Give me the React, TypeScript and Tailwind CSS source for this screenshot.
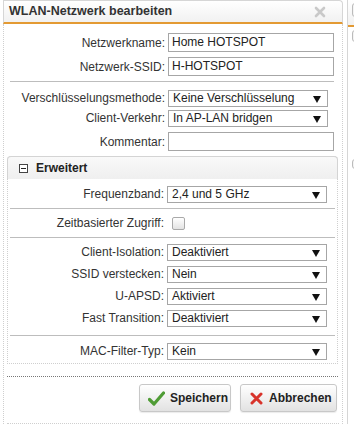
import React from "react";

const Arrow = () => (
  <svg width="8" height="7" viewBox="0 0 8 7" className="absolute right-[6px] top-[5px]">
    <path d="M0 0H8L4 7Z" fill="#111" />
  </svg>
);

function Select({ value }: { value: string }) {
  return (
    <div className="relative h-[17px] w-[160px] border border-[#a6a6a6] bg-white pl-[4px] text-[12px] leading-[15px] text-[#222]">
      {value}
      <Arrow />
    </div>
  );
}

function Input({ value }: { value?: string }) {
  return (
    <div className="h-[19px] w-[166px] border border-[#a6a6a6] bg-white pl-[3px] text-[12px] leading-[17px] text-[#222]">
      {value}
    </div>
  );
}

function Row({
  label,
  children,
  lw,
  className = "",
}: {
  label: string;
  children: React.ReactNode;
  lw: string;
  className?: string;
}) {
  return (
    <div className={`flex items-center ${className}`}>
      <div className={`${lw} shrink-0 pr-[3px] text-right text-[12px] text-[#333]`}>{label}</div>
      {children}
    </div>
  );
}

const Hr = ({ className = "" }: { className?: string }) => (
  <div className={`h-px bg-[#bdbdbd] ${className}`} />
);

export default function App() {
  const lwTop = "w-[164px]";
  const lwBox = "w-[159px]";

  return (
    <div className="flex h-[424px] w-[354px] overflow-hidden bg-white font-['Liberation_Sans',Arial,sans-serif]">
      <div className="ml-[3px] flex w-[340px] shrink-0 flex-col">
        {/* title */}
        <div className="flex h-[27px] items-center justify-between rounded-tr-[4px] border-x border-t border-b-2 border-x-[#d6d6d6] border-t-[#d6d6d6] border-b-[#e39a33] bg-gradient-to-b from-white to-[#f1f1f1] pl-[5px] pr-[16px]">
          <span className="text-[12.5px] font-bold text-[#333]">WLAN-Netzwerk bearbeiten</span>
          <svg width="12" height="12" viewBox="0 0 12 12">
            <path d="M2 2L10 10M10 2L2 10" stroke="#c9c9c9" strokeWidth="2.6" strokeLinecap="round" />
          </svg>
        </div>

        <div className="flex flex-1 flex-col border-x border-dotted border-[#cfcfcf]">
          <Row label="Netzwerkname:" lw={lwTop} className="mt-[9px]">
            <Input value="Home HOTSPOT" />
          </Row>
          <Row label="Netzwerk-SSID:" lw={lwTop} className="mt-[5px]">
            <Input value="H-HOTSPOT" />
          </Row>
          <Hr className="ml-[6px] mr-[8px] mt-[5px]" />
          <Row label="Verschlüsselungsmethode:" lw={lwTop} className="mt-[7px]">
            <Select value="Keine Verschlüsselung" />
          </Row>
          <Row label="Client-Verkehr:" lw={lwTop} className="mt-[2px]">
            <Select value="In AP-LAN bridgen" />
          </Row>
          <Row label="Kommentar:" lw={lwTop} className="mt-[5px]">
            <Input />
          </Row>

          {/* Erweitert */}
          <div className="ml-[3px] mr-[4px] mt-[5px] flex flex-col rounded-t-[4px] border border-dotted border-[#cfcfcf] pb-[3px]">
            <div className="-mx-px -mt-px flex h-[23px] items-center rounded-t-[4px] border border-b-0 border-[#d4d4d4] bg-gradient-to-b from-[#f9f9f9] to-[#efefef] pl-[11px]">
              <svg width="9" height="9" viewBox="0 0 9 9" className="mr-[8px]">
                <rect x="0.5" y="0.5" width="8" height="8" fill="white" stroke="#444" />
                <path d="M2 4.5H7" stroke="#222" />
              </svg>
              <span className="text-[12px] font-bold text-[#222]">Erweitert</span>
            </div>
            <Row label="Frequenzband:" lw={lwBox} className="mt-[6px]">
              <Select value="2,4 und 5 GHz" />
            </Row>
            <Hr className="mx-[2px] mt-[5px]" />
            <Row label="Zeitbasierter Zugriff:" lw={lwBox} className="h-[28px]">
              <div className="ml-[5px] h-[13px] w-[13px] rounded-[2px] border border-[#a9a9a9] bg-gradient-to-b from-white to-[#e3e3e3]" />
            </Row>
            <Hr className="mx-[2px]" />
            <Row label="Client-Isolation:" lw={lwBox} className="mt-[5px]">
              <Select value="Deaktiviert" />
            </Row>
            <Row label="SSID verstecken:" lw={lwBox} className="mt-[4px]">
              <Select value="Nein" />
            </Row>
            <Row label="U-APSD:" lw={lwBox} className="mt-[4px]">
              <Select value="Aktiviert" />
            </Row>
            <Row label="Fast Transition:" lw={lwBox} className="mt-[4px]">
              <Select value="Deaktiviert" />
            </Row>
            <Hr className="mx-[2px] mt-[8px]" />
            <Row label="MAC-Filter-Typ:" lw={lwBox} className="mt-[6px]">
              <Select value="Kein" />
            </Row>
          </div>

          <div className="ml-[3px] mr-[4px] mt-[12px] border-t border-dotted border-[#777]" />

          <div className="mt-[7px] flex justify-end gap-[9px] pr-[5px]">
            <button className="flex h-[28px] w-[92px] items-center rounded-[3px] border border-[#c8c8c8] bg-gradient-to-b from-white to-[#e2e2e2] pl-[8px] text-[12px] font-bold text-[#222] shadow-[0_1px_1px_rgba(0,0,0,0.08)]">
              <svg width="17" height="15" viewBox="0 0 17 15" className="mr-[5px]">
                <path d="M1.5 8.5L6 13L15.5 2" fill="none" stroke="#4f9c35" strokeWidth="3.2" strokeLinecap="round" strokeLinejoin="round" />
              </svg>
              Speichern
            </button>
            <button className="flex h-[28px] w-[97px] items-center rounded-[3px] border border-[#c8c8c8] bg-gradient-to-b from-white to-[#e2e2e2] pl-[9px] text-[12px] font-bold text-[#222] shadow-[0_1px_1px_rgba(0,0,0,0.08)]">
              <svg width="13" height="13" viewBox="0 0 13 13" className="mr-[6px]">
                <path d="M2 2L11 11M11 2L2 11" stroke="#d8332b" strokeWidth="3" strokeLinecap="round" />
              </svg>
              Abbrechen
            </button>
          </div>

          <div className="mx-[3px] mt-[11px] border-t border-dotted border-[#cfcfcf]" />
        </div>
      </div>

      {/* neighbour panel */}
      <div className="ml-[4px] flex flex-1 flex-col border-l border-[#d6d6d6]">
        <div className="h-[27px] border-b-2 border-[#e39a33] bg-gradient-to-b from-white to-[#f1f1f1] pl-[4px] pt-[3px]">
          <div className="h-[14px] w-[10px] rounded-[3px] border border-[#bbb] bg-[#f4f4f4]" />
        </div>
        <div className="ml-[4px] mt-[3px] h-[12px] w-[10px] rounded-[3px] border border-[#bbb] bg-[#f4f4f4]" />
        <div className="ml-[4px] mt-[117px] h-[10px] w-[10px] rounded-[3px] border border-[#bbb] bg-[#f4f4f4]" />
      </div>
    </div>
  );
}
